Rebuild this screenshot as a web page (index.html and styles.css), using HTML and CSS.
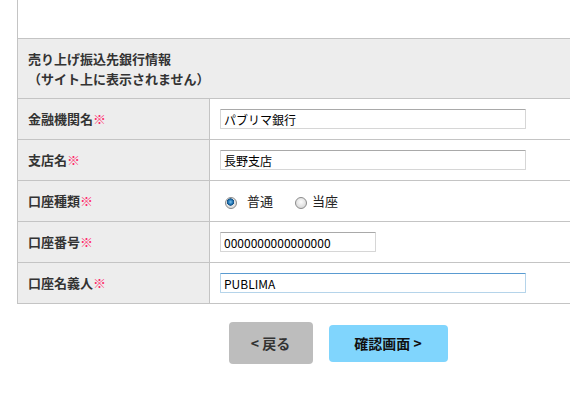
FILE: index.html
```html
<!DOCTYPE html>
<html lang="ja">
<head>
<meta charset="utf-8">
<link rel="stylesheet" href="styles.css">
</head>
<body>
<div class="wrap">
  <table class="form">
    <tr class="top"><td colspan="2"></td></tr>
    <tr class="head"><th colspan="2">売り上げ振込先銀行情報<br>（サイト上に表示されません）</th></tr>
    <tr>
      <th>金融機関名<span class="req">※</span></th>
      <td><input class="txt long" type="text" value="パブリマ銀行"></td>
    </tr>
    <tr>
      <th>支店名<span class="req">※</span></th>
      <td><input class="txt long" type="text" value="長野支店"></td>
    </tr>
    <tr>
      <th>口座種類<span class="req">※</span></th>
      <td>
        <div class="radios">
          <label class="rad first"><input type="radio" name="kind" checked><span>普通</span></label>
          <label class="rad second"><input type="radio" name="kind"><span>当座</span></label>
        </div>
      </td>
    </tr>
    <tr>
      <th>口座番号<span class="req">※</span></th>
      <td><input class="txt short" type="text" value="0000000000000000"></td>
    </tr>
    <tr>
      <th>口座名義人<span class="req">※</span></th>
      <td><input class="txt long focus" type="text" value="PUBLIMA"></td>
    </tr>
  </table>
  <div class="buttons">
    <button class="btn back">&lt;&nbsp;戻る</button>
    <button class="btn next">確認画面&nbsp;&gt;</button>
  </div>
</div>
</body>
</html>
```
FILE: styles.css
```css
html, body {
  margin: 0;
  padding: 0;
  background: #fff;
  overflow: hidden;
}
body {
  font-family: "Noto Sans CJK JP", "Noto Sans", sans-serif;
  color: #333;
  font-size: 13px;
}
.wrap {
  margin-left: 17px;
  width: 642px;
}
.form {
  width: 100%;
  border-collapse: collapse;
  margin-top: -1px;
}
.form th, .form td {
  border: 1px solid #c4c4c4;
  padding: 0;
  text-align: left;
  vertical-align: middle;
}
.form tr { height: 41px; }
.form tr.top { height: 39px; }
.form tr.top td { background: #fff; }
.form tr.head { height: 60px; }
.form th {
  width: 181px;
  background: #ededed;
  font-weight: bold;
  padding-left: 10px;
  line-height: 20px;
  font-size: 13px;
  color: #333;
}
.form tr.head th { padding-top: 1px; }
.form td { padding-left: 10px; }
.req {
  color: #ff2a6a;
  font-weight: bold;
}
.txt {
  box-sizing: border-box;
  height: 20px;
  border: 1px solid #d6d6d6;
  border-top-color: #a9a9a9;
  border-radius: 1px;
  padding: 0 3px;
  font-family: "Noto Sans CJK JP", "Noto Sans", sans-serif;
  font-size: 12px;
  color: #000;
  margin: 0;
  display: block;
  outline: none;
}
.txt.long { width: 306px; }
.txt.short { width: 156px; }
.txt.focus {
  border-color: #b5d4ea;
  border-top-color: #5a9bd1;
}
.radios {
  display: flex;
  align-items: center;
  gap: 22px;
  padding-left: 5px;
}
.rad {
  display: flex;
  align-items: center;
  font-size: 13px;
  color: #222;
}
.rad.first { gap: 10px; }
.rad.second { gap: 5px; }
.rad input {
  appearance: none;
  -webkit-appearance: none;
  margin: 0;
  width: 12px;
  height: 12px;
  border-radius: 50%;
  border: 1px solid #8c8c8c;
  background: radial-gradient(circle at 50% 40%, #fdfdfd 0%, #dcdcdc 70%, #c8c8c8 100%);
  box-sizing: border-box;
  margin-top: 3px;
}
.rad input:checked {
  background: radial-gradient(circle at 45% 40%, #7cc4f0 0%, #1d6fae 30%, #134f82 42%, #e6e6e6 48%, #d0d0d0 100%);
}
.rad span { line-height: 16px; }
.buttons {
  display: flex;
  justify-content: center;
  align-items: center;
  gap: 16px;
  margin-top: 18px;
}
.btn {
  border: none;
  border-radius: 4px;
  font-family: "Noto Sans CJK JP", "Noto Sans", sans-serif;
  font-weight: bold;
  font-size: 14px;
  color: #222;
  padding: 0;
  cursor: pointer;
}
.back {
  width: 84px;
  height: 42px;
  background: #bdbdbd;
  color: #333;
}
.next {
  width: 119px;
  height: 37px;
  background: #80d5fd;
  color: #111;
}
```
